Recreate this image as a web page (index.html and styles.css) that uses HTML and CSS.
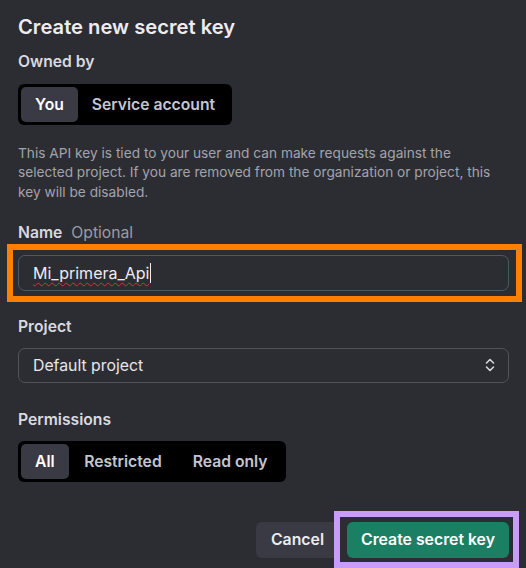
FILE: index.html
```html
<!DOCTYPE html>
<html>
<head>
<meta charset="utf-8">
<link rel="stylesheet" href="styles.css">
</head>
<body>
<div class="dialog">
  <h1 class="title">Create new secret key</h1>
  <div class="label">Owned by</div>
  <div class="seg seg-owner">
    <span class="seg-item active">You</span>
    <span class="seg-item">Service account</span>
  </div>
  <p class="desc">This API key is tied to your user and can make requests against the selected project. If you are removed from the organization or project, this key will be disabled.</p>
  <div class="label name-label">Name <span class="optional">Optional</span></div>
  <div class="field-wrap">
    <div class="input"><span class="typed">Mi_primera_Api</span><span class="caret"></span></div>
    <div class="hl-orange"></div>
  </div>
  <div class="label project-label">Project</div>
  <div class="select">
    <span>Default project</span>
    <svg class="chev" width="10" height="14" viewBox="0 0 10 14" fill="none" stroke="#d6d6dc" stroke-width="1.6" stroke-linecap="round" stroke-linejoin="round"><path d="M1.5 5 L5 1.5 L8.5 5"/><path d="M1.5 9 L5 12.5 L8.5 9"/></svg>
  </div>
  <div class="label perm-label">Permissions</div>
  <div class="seg seg-perm">
    <span class="seg-item active">All</span>
    <span class="seg-item">Restricted</span>
    <span class="seg-item">Read only</span>
  </div>
  <div class="actions">
    <button class="btn cancel">Cancel</button>
    <div class="create-wrap">
      <button class="btn create">Create secret key</button>
      <div class="hl-purple"></div>
    </div>
  </div>
</div>
</body>
</html>
```
FILE: styles.css
```css
html, body {
  margin: 0;
  padding: 0;
  background: #2c2d32;
  height: 568px;
  overflow: hidden;
}
body {
  font-family: Inter, "Noto Sans", sans-serif;
  color: #ececf1;
}
.dialog {
  padding: 13px 17px 0 18px;
}
.title {
  margin: 0;
  font-size: 20.2px;
  line-height: 28px;
  font-weight: 600;
  color: #ececf1;
}
.label {
  font-size: 15.7px;
  line-height: 20px;
  font-weight: 600;
  color: #d9d9e0;
  margin-top: 11px;
}
.optional {
  font-weight: 400;
  color: #9b9ba6;
  margin-left: 5px;
}
.seg {
  display: inline-flex;
  background: #000;
  border-radius: 6px;
  padding: 3px;
  margin-top: 12px;
  height: 35px;
}
.seg-item {
  display: flex;
  align-items: center;
  padding: 0 15.5px;
  font-size: 15.7px;
  font-weight: 600;
  color: #c5c5d2;
  border-radius: 5px;
}
.seg-item.active {
  background: #393a43;
  color: #fff;
}
.seg-owner .seg-item { padding: 0 14px; }
.seg-perm .seg-item.active { padding: 0 14px; }
.desc {
  margin: 19px 0 0;
  font-size: 13.7px;
  line-height: 19.3px;
  color: #a3a3ad;
  max-width: 485px;
}
.name-label { margin-top: 21px; }
.field-wrap {
  position: relative;
  margin-top: 12px;
}
.input {
  height: 34px;
  border: 1px solid #435e61;
  border-radius: 7px;
  display: flex;
  align-items: center;
  padding: 0 14px;
  font-size: 16px;
  color: #ececf1;
}
.typed {
  text-decoration: underline wavy #d33;
  text-decoration-thickness: 1px;
  text-underline-offset: 3px;
}
.caret {
  width: 1px;
  height: 20px;
  background: #ececf1;
  margin-left: 1px;
}
.hl-orange {
  position: absolute;
  left: -11px;
  top: -11px;
  right: -13px;
  bottom: -11px;
  border: 6px solid #ff7f00;
  pointer-events: none;
}
.project-label { margin-top: 26px; }
.select {
  margin-top: 11px;
  height: 33px;
  border: 1px solid #52525c;
  border-radius: 7px;
  display: flex;
  align-items: center;
  justify-content: space-between;
  padding: 0 13px 0 14px;
  font-size: 15.8px;
  color: #e6e6ec;
}
.chev { display: block; }
.perm-label { margin-top: 27px; }
.seg-perm { margin-top: 11px; }
.actions {
  display: flex;
  justify-content: flex-end;
  gap: 8px;
  margin-top: 40px;
}
.btn {
  height: 36px;
  border: none;
  border-radius: 6px;
  font-family: Inter, "Noto Sans", sans-serif;
  font-size: 15.8px;
  font-weight: 600;
  padding: 0 10px;
  color: #ececf1;
}
.cancel {
  background: #393a43;
  width: 83px;
}
.create-wrap { position: relative; }
.create {
  background: #1b7f64;
  color: #fff;
  width: 162px;
}
.hl-purple {
  position: absolute;
  left: -13px;
  top: -11px;
  right: -10px;
  bottom: -10px;
  border: 6px solid #c99cf7;
  pointer-events: none;
}
```
